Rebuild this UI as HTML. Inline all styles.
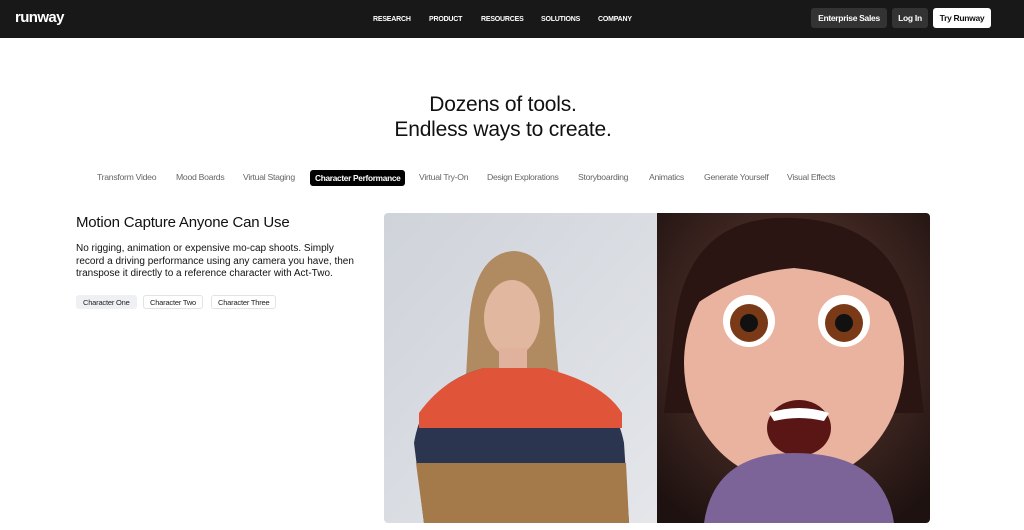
<!DOCTYPE html>
<html><head><meta charset="utf-8"><style>
*{margin:0;padding:0;box-sizing:border-box}
body{width:1024px;height:530px;overflow:hidden;background:#fff;font-family:"Liberation Sans",sans-serif;position:relative}
.nav{position:absolute;left:0;top:0;width:1024px;height:38px;background:#181818}
.logo{position:absolute;left:15px;top:9px;color:#fff;font-weight:bold;font-size:15px;letter-spacing:-0.6px}
.links{position:absolute;top:16px;color:#fff;font-size:7px;font-weight:bold;letter-spacing:-0.2px}
.btn{position:absolute;top:8px;height:20px;border-radius:3px;font-size:8.5px;font-weight:bold;line-height:20px;text-align:center;letter-spacing:-0.3px}
h1{position:absolute;top:92px;left:-9px;width:1024px;text-align:center;font-weight:normal;font-size:21px;line-height:25px;color:#111;letter-spacing:-0.2px}
.tab{position:absolute;top:172px;font-size:8.7px;color:#666;letter-spacing:-0.3px}
.tab.on{background:#000;color:#fff;font-weight:bold;padding:3px 5px;border-radius:3px;top:170px;font-size:8.3px}
h2{position:absolute;left:76px;top:214px;font-weight:normal;font-size:15px;color:#111;letter-spacing:-0.2px}
p{position:absolute;left:76px;top:243px;width:278px;font-size:10px;line-height:12.5px;color:#111}
.chip{position:absolute;top:295px;height:14px;font-size:7.5px;line-height:13px;padding:0 6px;border:1px solid #e3e3e3;border-radius:3px;color:#222;letter-spacing:-0.2px}
.vid{position:absolute;left:384px;top:213px;width:546px;height:310px;border-radius:4px;overflow:hidden}
</style></head><body>
<div class="nav">
<div class="logo">runway</div>
<div class="links" style="left:373px">RESEARCH</div>
<div class="links" style="left:429px">PRODUCT</div>
<div class="links" style="left:481px">RESOURCES</div>
<div class="links" style="left:541px">SOLUTIONS</div>
<div class="links" style="left:598px">COMPANY</div>
<div class="btn" style="left:811px;width:76px;background:#333;color:#fff">Enterprise Sales</div>
<div class="btn" style="left:892px;width:36px;background:#333;color:#fff">Log In</div>
<div class="btn" style="left:933px;width:58px;background:#fff;color:#111">Try Runway</div>
</div>
<h1>Dozens of tools.<br>Endless ways to create.</h1>
<div class="tab" style="left:97px">Transform Video</div>
<div class="tab" style="left:176px">Mood Boards</div>
<div class="tab" style="left:243px">Virtual Staging</div>
<div class="tab on" style="left:310px">Character Performance</div>
<div class="tab" style="left:419px">Virtual Try-On</div>
<div class="tab" style="left:487px">Design Explorations</div>
<div class="tab" style="left:578px">Storyboarding</div>
<div class="tab" style="left:649px">Animatics</div>
<div class="tab" style="left:704px">Generate Yourself</div>
<div class="tab" style="left:787px">Visual Effects</div>
<h2>Motion Capture Anyone Can Use</h2>
<p>No rigging, animation or expensive mo-cap shoots. Simply record a driving performance using any camera you have, then transpose it directly to a reference character with Act-Two.</p>
<div class="chip" style="left:76px;background:#eef0f4;border-color:#eef0f4">Character One</div>
<div class="chip" style="left:143px">Character Two</div>
<div class="chip" style="left:211px">Character Three</div>
<div class="vid">
<svg width="546" height="310" viewBox="0 0 546 310">
<defs><linearGradient id="g1" x1="0" y1="0" x2="1" y2="1"><stop offset="0" stop-color="#cfd3da"/><stop offset="1" stop-color="#e4e6ea"/></linearGradient>
<radialGradient id="g2" cx="0.5" cy="0.4" r="0.7"><stop offset="0" stop-color="#6a4038"/><stop offset="1" stop-color="#1e1210"/></radialGradient></defs>
<rect width="273" height="310" fill="url(#g1)"/>
<path d="M85 110 Q90 40 130 38 Q170 40 170 110 L178 200 L80 200Z" fill="#b08a60"/>
<ellipse cx="128" cy="105" rx="28" ry="38" fill="#e2b7a0"/>
<rect x="115" y="135" width="28" height="25" fill="#e0b19c"/>
<path d="M40 310 L30 230 Q40 170 100 155 L160 155 Q230 175 240 230 L245 310Z" fill="#2c3550"/>
<path d="M35 200 Q60 165 100 155 L160 155 Q220 170 238 200 L238 215 L35 215Z" fill="#e0553a"/>
<path d="M32 250 L242 250 L245 310 L40 310Z" fill="#a57a4a"/>
<rect x="273" width="273" height="310" fill="url(#g2)"/>
<path d="M290 120 Q300 0 410 5 Q520 10 530 120 L540 200 L280 200Z" fill="#2a1512"/>
<ellipse cx="410" cy="150" rx="110" ry="120" fill="#eab3a0"/>
<path d="M300 100 Q330 20 410 25 Q490 20 520 100 Q470 60 410 55 Q350 60 300 100Z" fill="#2a1512"/>
<circle cx="365" cy="108" r="26" fill="#fff"/><circle cx="365" cy="110" r="19" fill="#7a3a18"/><circle cx="365" cy="110" r="9" fill="#111"/>
<circle cx="460" cy="108" r="26" fill="#fff"/><circle cx="460" cy="110" r="19" fill="#7a3a18"/><circle cx="460" cy="110" r="9" fill="#111"/>
<ellipse cx="415" cy="215" rx="32" ry="28" fill="#5a1614"/>
<path d="M385 200 Q415 190 445 200 L440 208 Q415 202 390 208Z" fill="#fff"/>
<path d="M320 310 Q330 240 410 240 Q500 240 510 310Z" fill="#7c6498"/>
</svg>
</div>
</body></html>
